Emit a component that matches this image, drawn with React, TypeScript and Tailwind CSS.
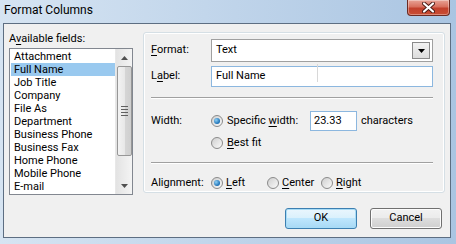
import React from "react";

const font = { fontFamily: 'Roboto, "Noto Sans", sans-serif' };

function Radio({ checked }: { checked?: boolean }) {
  return (
    <div className="w-[12px] h-[12px] rounded-full border border-[#8a8a8a] bg-gradient-to-br from-[#cfcfcf] to-[#fafafa] flex items-center justify-center shrink-0">
      {checked && (
        <div className="w-[6px] h-[6px] rounded-full bg-[radial-gradient(circle_at_35%_35%,#8fd0f5,#1a6fb5_70%)]" />
      )}
    </div>
  );
}

function Btn({ children, def }: { children: React.ReactNode; def?: boolean }) {
  return (
    <div
      className={
        "w-[72px] h-[21px] rounded-[3px] border flex items-center justify-center text-[11px] text-black " +
        (def
          ? "border-[#3c7fb1] bg-[linear-gradient(#eaf6fd_0%,#d9f0fc_50%,#bee6fd_50%,#a7d9f5_100%)] shadow-[inset_0_0_0_1px_#a8dcf6]"
          : "border-[#707070] bg-[linear-gradient(#f2f2f2_0%,#ebebeb_50%,#dddddd_50%,#cfcfcf_100%)] shadow-[inset_0_0_0_1px_#fcfcfc]")
      }
    >
      {children}
    </div>
  );
}

const items = [
  "Attachment",
  "Full Name",
  "Job Title",
  "Company",
  "File As",
  "Department",
  "Business Phone",
  "Business Fax",
  "Home Phone",
  "Mobile Phone",
  "E-mail",
];

export default function App() {
  return (
    <div
      className="w-[456px] h-[244px] overflow-hidden bg-[linear-gradient(90deg,#d6e4f2_0%,#c2d6eb_45%,#aac5e2_100%)] flex flex-col relative"
      style={font}
    >
      {/* title bar */}
      <div className="h-[23px] flex items-start relative shrink-0">
        <div className="pl-[4px] pt-[3px] text-[12px] text-black leading-[15px]">Format Columns</div>
        <div className="absolute right-[6px] top-0 w-[43px] h-[16px] rounded-b-[4px] border border-t-0 border-[#6b2a22] bg-[linear-gradient(#e8a396_0%,#d8705e_45%,#c2402c_55%,#c94d33_100%)] flex items-center justify-center shadow-[inset_0_0_0_1px_rgba(255,255,255,0.35)]">
          <svg width="13" height="11" viewBox="0 0 13 11">
            <path d="M2 1.5 L11 9.5 M11 1.5 L2 9.5" stroke="#4a1a14" strokeWidth="4" strokeLinecap="round" />
            <path d="M2 1.5 L11 9.5 M11 1.5 L2 9.5" stroke="#ffffff" strokeWidth="2.2" strokeLinecap="round" />
          </svg>
        </div>
      </div>

      {/* body */}
      <div className="ml-[3px] w-[448px] h-[215px] border border-[#5d6e82] bg-[#f0f0f0] flex flex-col shrink-0">
        <div className="flex h-[172px] shrink-0">
          {/* left column */}
          <div className="pl-[5px] pt-[8px] flex flex-col shrink-0">
            <div className="text-[11px] leading-[14px] text-black">
              A<span className="underline underline-offset-2">v</span>ailable fields:
            </div>
            <div className="mt-[2px] w-[124px] h-[147px] shrink-0 border border-[#828790] bg-white flex overflow-hidden">
              <div className="flex-1 flex flex-col pt-[1px] pl-[1px] overflow-hidden">
                {items.map((it, i) => (
                  <div
                    key={it}
                    className={
                      "h-[13px] leading-[13px] text-[11px] pl-[3px] whitespace-nowrap text-black shrink-0 " +
                      (i === 1 ? "bg-[#99c9ef]" : "")
                    }
                  >
                    {it}
                  </div>
                ))}
              </div>
              <div className="w-[17px] bg-[linear-gradient(90deg,#e3e3e3,#f4f4f4)] flex flex-col items-center border-l border-[#e8e8e8]">
                <div className="h-[17px] flex items-center justify-center">
                  <svg width="7" height="4" viewBox="0 0 7 4">
                    <path d="M0 4 L3.5 0 L7 4 Z" fill="#505050" />
                  </svg>
                </div>
                <div className="w-[15px] h-[90px] rounded-[2px] border border-[#979797] bg-[linear-gradient(90deg,#f3f3f3_0%,#e8e8e8_50%,#d6d6d6_51%,#cfcfcf_100%)] flex flex-col items-center justify-center gap-[2px]">
                  <div className="w-[7px] h-[1px] bg-[#606060]" />
                  <div className="w-[7px] h-[1px] bg-[#606060]" />
                  <div className="w-[7px] h-[1px] bg-[#606060]" />
                  <div className="w-[7px] h-[1px] bg-[#606060]" />
                </div>
                <div className="flex-1" />
                <div className="h-[17px] flex items-center justify-center">
                  <svg width="7" height="4" viewBox="0 0 7 4">
                    <path d="M0 0 L3.5 4 L7 0 Z" fill="#505050" />
                  </svg>
                </div>
              </div>
            </div>
          </div>

          {/* right group */}
          <div className="ml-[10px] mt-[8px] w-[302px] h-[161px] border border-[#d5dfe5] rounded-[3px] shadow-[inset_0_0_0_1px_#ffffff] flex flex-col px-[7px] relative">
            {/* Format row */}
            <div className="flex items-center mt-[6px] h-[23px]">
              <div className="w-[60px] text-[11px] text-black">
                <span className="underline underline-offset-2">F</span>ormat:
              </div>
              <div className="w-[222px] h-[23px] border border-[#a0a0a0] bg-white flex items-center justify-between">
                <span className="text-[11px] pl-[4px] text-black">Text</span>
                <div className="w-[18px] h-[17px] mr-[2px] border border-[#8a8a8a] bg-[linear-gradient(#f2f2f2,#dcdcdc)] flex items-center justify-center">
                  <svg width="7" height="4" viewBox="0 0 7 4">
                    <path d="M0 0 L3.5 4 L7 0 Z" fill="#000" />
                  </svg>
                </div>
              </div>
            </div>
            {/* Label row */}
            <div className="flex items-center mt-[4px] h-[21px]">
              <div className="w-[60px] text-[11px] text-black">
                L<span className="underline underline-offset-2">a</span>bel:
              </div>
              <div className="w-[222px] h-[21px] border border-[#8cb7df] bg-white flex items-center relative">
                <span className="text-[11px] pl-[4px] text-black">Full Name</span>
                <div className="absolute left-[105px] top-[-3px] w-[1px] h-[18px] bg-[#d8d8d8]" />
              </div>
            </div>
            {/* separator */}
            <div className="mt-[10px] w-[282px] h-[1px] bg-[#a0a0a0] border-b border-white box-content" />
            {/* Width */}
            <div className="flex items-center mt-[12px] h-[20px]">
              <div className="w-[60px] text-[11px] text-black">Width:</div>
              <div className="flex items-center gap-[4px] w-[99px]">
                <Radio checked />
                <span className="text-[11px] text-black whitespace-nowrap">
                  Specific <span className="underline underline-offset-2">w</span>idth:
                </span>
              </div>
              <div className="w-[47px] h-[20px] border border-[#8cb7df] bg-white flex items-center">
                <span className="text-[11px] pl-[3px] text-black">23.33</span>
              </div>
              <span className="text-[11px] text-black ml-[4px]">characters</span>
            </div>
            <div className="flex items-center mt-[5px] h-[14px] pl-[60px] gap-[4px]">
              <Radio />
              <span className="text-[11px] text-black">
                <span className="underline underline-offset-2">B</span>est fit
              </span>
            </div>
            <div className="mt-[12px] w-[282px] h-[1px] bg-[#a0a0a0] border-b border-white box-content" />
            <div className="flex items-center mt-[12px] h-[14px]">
              <div className="w-[60px] text-[11px] text-black">Alignment:</div>
              <div className="flex items-center gap-[3px] w-[56px]">
                <Radio checked />
                <span className="text-[11px] text-black">
                  <span className="underline underline-offset-2">L</span>eft
                </span>
              </div>
              <div className="flex items-center gap-[3px] w-[54px]">
                <Radio />
                <span className="text-[11px] text-black">
                  <span className="underline underline-offset-2">C</span>enter
                </span>
              </div>
              <div className="flex items-center gap-[3px]">
                <Radio />
                <span className="text-[11px] text-black">
                  <span className="underline underline-offset-2">R</span>ight
                </span>
              </div>
            </div>
          </div>
        </div>

        {/* buttons */}
        <div className="flex justify-end gap-[13px] pr-[8px] mt-[12px]">
          <Btn def>OK</Btn>
          <Btn>Cancel</Btn>
        </div>
      </div>
    </div>
  );
}
